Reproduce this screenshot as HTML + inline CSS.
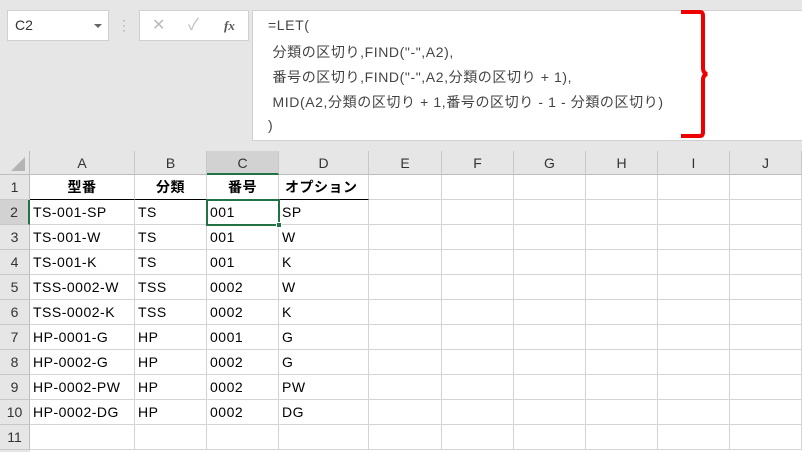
<!DOCTYPE html><html><head><meta charset="utf-8"><style>
body{margin:0;width:802px;height:452px;overflow:hidden;background:#e6e6e6;font-family:"Liberation Sans","Noto Sans CJK JP",sans-serif;position:relative}
.a{position:absolute;box-sizing:border-box}
.ch{position:absolute;top:151px;height:24px;background:#e6e6e6;border-right:1px solid #c8c8c8;border-bottom:1px solid #bdbdbd;text-align:center;line-height:24px;font-size:14px;color:#333;box-sizing:border-box}
.rh{position:absolute;left:0;width:30px;height:25px;background:#e6e6e6;border-right:1px solid #bdbdbd;border-bottom:1px solid #c8c8c8;text-align:center;line-height:25px;font-size:14px;color:#333;box-sizing:border-box}
.c{position:absolute;height:25px;border-right:1px solid #d4d4d4;border-bottom:1px solid #d4d4d4;box-sizing:border-box;font-size:14px;line-height:25px;padding-left:3px;color:#000;white-space:nowrap;background:#fff;letter-spacing:0.5px}
.f{position:absolute;left:268px;font-size:14px;color:#444;white-space:pre;letter-spacing:0.6px}
</style></head><body>
<div class="a" style="left:7px;top:10px;width:102px;height:31px;background:#fff;border:1px solid #d0d0d0;font-size:14px;line-height:29px;padding-left:7px;color:#333">C2<span style="position:absolute;right:6px;top:13px;border:4px solid transparent;border-top:4px solid #666"></span></div>
<div class="a" style="left:122px;top:18px;color:#999;font-size:12px;line-height:5px">·<br>·<br>·</div>
<div class="a" style="left:139px;top:10px;width:110px;height:31px;background:#fff;border:1px solid #d0d0d0;font-size:16px;line-height:29px;color:#bbb"><span style="position:absolute;left:12px">✕</span><span style="position:absolute;left:48px">✓</span><span style="position:absolute;left:84px;color:#555;font-family:'Liberation Serif',serif;font-style:italic;font-size:13px;font-weight:bold">fx</span></div>
<div class="a" style="left:252px;top:10px;width:550px;height:131px;background:#fff;border:1px solid #d0d0d0;border-right:none"></div>
<div class="f" style="top:17px">=LET(</div>
<div class="f" style="top:42px"> 分類の区切り,FIND("-",A2),</div>
<div class="f" style="top:67px"> 番号の区切り,FIND("-",A2,分類の区切り + 1),</div>
<div class="f" style="top:92px"> MID(A2,分類の区切り + 1,番号の区切り - 1 - 分類の区切り)</div>
<div class="f" style="top:117px">)</div>
<svg class="a" style="left:676px;top:8px" width="34" height="132"><path d="M5 4 H24 Q27 4 27 8 V60 Q27 65 31 66 Q27 67 27 72 V124 Q27 128 24 128 H5" fill="none" stroke="#e00" stroke-width="4"/></svg>
<div class="a" style="left:0;top:151px;width:30px;height:24px;background:#e6e6e6;border-right:1px solid #bdbdbd;border-bottom:1px solid #bdbdbd"><span style="position:absolute;right:4px;bottom:3px;border-left:14px solid transparent;border-bottom:14px solid #b4b4b4"></span></div>
<div class="ch" style="left:30px;width:105px">A</div>
<div class="ch" style="left:135px;width:72px">B</div>
<div class="ch" style="left:207px;width:72px;background:#d2d2d2;border-bottom:2px solid #217346">C</div>
<div class="ch" style="left:279px;width:90px">D</div>
<div class="ch" style="left:369px;width:73px">E</div>
<div class="ch" style="left:442px;width:72px">F</div>
<div class="ch" style="left:514px;width:72px">G</div>
<div class="ch" style="left:586px;width:72px">H</div>
<div class="ch" style="left:658px;width:72px">I</div>
<div class="ch" style="left:730px;width:72px">J</div>
<div class="a" style="left:30px;top:175px;width:772px;height:277px;background:#fff"></div>
<div id="g"></div>
<script>
const cols=[[30,105],[135,72],[207,72],[279,90],[369,73],[442,72],[514,72],[586,72],[658,72],[730,72]];
const data=[["型番","分類","番号","オプション"],["TS-001-SP","TS","001","SP"],["TS-001-W","TS","001","W"],["TS-001-K","TS","001","K"],["TSS-0002-W","TSS","0002","W"],["TSS-0002-K","TSS","0002","K"],["HP-0001-G","HP","0001","G"],["HP-0002-G","HP","0002","G"],["HP-0002-PW","HP","0002","PW"],["HP-0002-DG","HP","0002","DG"],["","","",""]];
let h="";
for(let r=0;r<11;r++){const y=175+r*25;
h+=`<div class="rh" style="top:${y}px;${r==1?'background:#d2d2d2;border-right:2px solid #217346':''}">${r+1}</div>`;
cols.forEach((c,i)=>{let t=i<4?data[r][i]:"";let st=`left:${c[0]}px;top:${y}px;width:${c[1]}px;`;
if(r==0&&i<4)st+="font-weight:bold;text-align:center;padding-left:0;border-bottom:1px solid #000;";
if(r==0&&i==3)st+="text-align:left;padding-left:6px;";
h+=`<div class="c" style="${st}">${t}</div>`;});}
h+=`<div class="a" style="left:206px;top:199px;width:74px;height:27px;border:2px solid #217346"></div><div class="a" style="left:276px;top:222px;width:6px;height:6px;background:#217346;border:1px solid #fff"></div>`;
document.getElementById("g").innerHTML=h;
</script>
</body></html>
